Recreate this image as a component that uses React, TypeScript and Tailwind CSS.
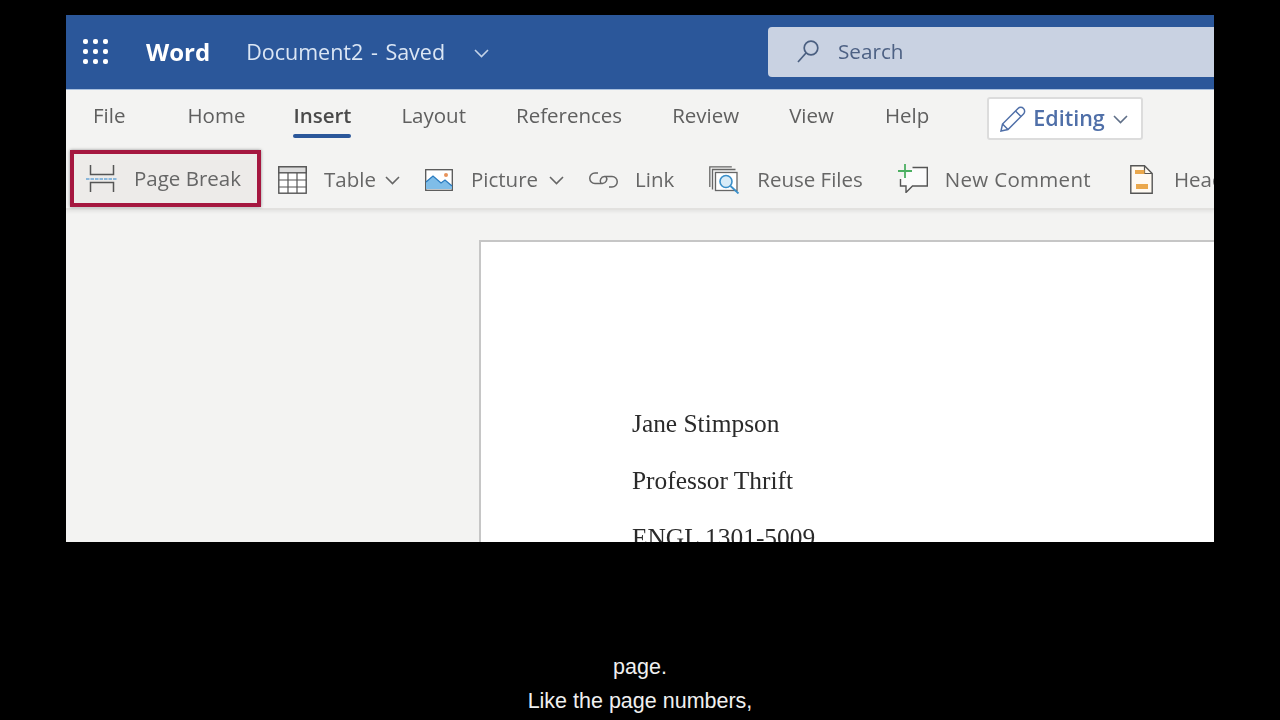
const tabs = [
  { label: "File", ml: "ml-[27px]" },
  { label: "Home", ml: "ml-[62px]" },
  { label: "Insert", ml: "ml-[48px]", active: true },
  { label: "Layout", ml: "ml-[50px]" },
  { label: "References", ml: "ml-[50px]" },
  { label: "Review", ml: "ml-[50px]" },
  { label: "View", ml: "ml-[50px]" },
  { label: "Help", ml: "ml-[51px]" },
];

function AppGrid() {
  const dots = [0, 1, 2, 3, 4, 5, 6, 7, 8];
  return (
    <div className="grid grid-cols-3 gap-[5px] w-[25px] mb-[2px]">
      {dots.map((d) => (
        <div key={d} className="w-[5px] h-[5px] rounded-[2px] bg-white" />
      ))}
    </div>
  );
}

function Chevron({ color = "#666" }: { color?: string }) {
  return (
    <svg width="15" height="9" viewBox="0 0 15 9" fill="none" stroke={color} strokeWidth="1.6">
      <path d="M1 1l6.500 6.500L14 1" />
    </svg>
  );
}

function PageBreakIcon() {
  return (
    <svg width="31" height="27" viewBox="0 0 31 27" fill="none">
      <path d="M4.500 0v9.500h23V0" stroke="#555" strokeWidth="1.500" />
      <path d="M0 14h31" stroke="#6aa6d6" strokeWidth="1.500" strokeDasharray="3.500 1" />
      <path d="M4.500 27v-9.500h23V27" stroke="#555" strokeWidth="1.500" />
    </svg>
  );
}

function TableIcon() {
  return (
    <svg width="29" height="28" viewBox="0 0 29 28" fill="none">
      <rect x="0.800" y="0.800" width="27.400" height="26.400" fill="#fff" stroke="#555" strokeWidth="1.400" />
      <rect x="0.800" y="0.800" width="27.400" height="6" fill="#dcdcdc" stroke="#555" strokeWidth="1.400" />
      <path d="M10 7v20M19 7v20M1 14h27M1 21h27" stroke="#555" strokeWidth="1.200" />
    </svg>
  );
}

function PictureIcon() {
  return (
    <svg width="28" height="22" viewBox="0 0 28 22" fill="none">
      <rect x="0.700" y="0.700" width="26.600" height="20.600" fill="#fff" stroke="#555" strokeWidth="1.300" />
      <path d="M1 20v-7l7-6 8 7 4-3 7 6v3z" fill="#7fbde8" />
      <path d="M1 13l7-6 8 7 4-3 7 6" stroke="#2a7cc0" strokeWidth="1.300" />
      <circle cx="21" cy="6" r="2" fill="#e8935a" />
    </svg>
  );
}

function LinkIcon() {
  return (
    <svg width="29" height="16" viewBox="0 0 29 16" fill="none" stroke="#666" strokeWidth="1.500">
      <path d="M9 1H6a5 5 0 0 0 0 10.500h7.500a4.500 4.500 0 0 0 3.500-7" />
      <path d="M20 15h3a5 5 0 0 0 0-10.500h-7.500a4.500 4.500 0 0 0-3.500 7" />
    </svg>
  );
}

function ReuseIcon() {
  return (
    <svg width="31" height="28" viewBox="0 0 31 28" fill="none">
      <path d="M0.800 21V0.800h22" stroke="#666" strokeWidth="1.300" />
      <path d="M3.500 23.500V3.500h23" stroke="#666" strokeWidth="1.300" />
      <rect x="6.500" y="6.500" width="21.500" height="18" fill="#fff" stroke="#666" strokeWidth="1.300" />
      <circle cx="17" cy="15.500" r="6" fill="#d8ecf8" stroke="#3a8fc9" strokeWidth="1.600" />
      <path d="M21.500 20l8 7.500" stroke="#3a8fc9" strokeWidth="1.800" />
    </svg>
  );
}

function CommentIcon() {
  return (
    <svg width="31" height="29" viewBox="0 0 31 29" fill="none">
      <path d="M3.500 15v7H9v6.500l6.500-6.500H30.300V3.500H15.500" stroke="#555" strokeWidth="1.400" fill="#fbfbfb" />
      <path d="M8 0v14M1 7h14" stroke="#4caf62" strokeWidth="1.800" />
    </svg>
  );
}

function HeaderIcon() {
  return (
    <svg width="23" height="29" viewBox="0 0 23 29" fill="none">
      <path d="M0.800 0.800h13.700l7.700 7.700v19.700H0.800z" fill="#fffaf2" stroke="#555" strokeWidth="1.400" />
      <path d="M14.500 1v7.500H22" stroke="#555" strokeWidth="1.200" />
      <rect x="5" y="5" width="9.500" height="4" fill="#eba84b" />
      <rect x="6" y="19" width="12" height="5" fill="#eba84b" />
    </svg>
  );
}

function SearchIcon() {
  return (
    <svg width="22" height="23" viewBox="0 0 22 23" fill="none" stroke="#4a5f80" strokeWidth="1.700">
      <circle cx="14" cy="8" r="6.800" />
      <path d="M9 13L1 22" />
    </svg>
  );
}

function EditIcon() {
  return (
    <svg width="26" height="26" viewBox="0 0 26 26" fill="none" stroke="#4f6fa8" strokeWidth="1.500">
      <path d="M1 25l1.500-7L18 2.500a2.800 2.800 0 0 1 5.500 5.500L8 23.500z" />
      <path d="M2.500 18l5.500 5.500M15.500 5l5.500 5.500" />
    </svg>
  );
}

export default function App() {
  return (
    <div
      className="w-[1280px] h-[720px] overflow-hidden bg-black flex flex-col"
      style={{ fontFamily: '"Open Sans", sans-serif' }}
    >
      <div className="ml-[66px] mt-[15px] w-[1148px] h-[527px] shrink-0 overflow-hidden flex flex-col bg-[#f3f3f2] blur-[0.5px]">
        {/* title bar */}
        <div className="h-[75px] shrink-0 bg-[#2b579a] border-b border-[#a9c0de] flex items-center">
          <div className="ml-[17px]">
            <AppGrid />
          </div>
          <span className="ml-[38px] text-[24px] font-bold text-white">Word</span>
          <span className="ml-[36px] text-[21.500px] text-[#dbe6f4] [word-spacing:2px]">Document2 - Saved</span>
          <div className="ml-[29px] mt-[3px]">
            <Chevron color="#c3d3e8" />
          </div>
          <div className="ml-auto w-[446px] h-[50px] mb-[1px] bg-[#c9d2e2] rounded-l-[4px] flex items-center pl-[29px]">
            <SearchIcon />
            <span className="ml-[19px] text-[20.700px] text-[#4d6184]">Search</span>
          </div>
        </div>

        {/* tabs */}
        <div className="h-[60px] shrink-0 flex items-start">
          {tabs.map((t) => (
            <div key={t.label} className={`${t.ml} flex flex-col items-stretch pt-[11px]`}>
              <span
                className={
                  t.active
                    ? "text-[20.500px] leading-[28px] font-semibold text-[#4a4a4a]"
                    : "text-[20.500px] leading-[28px] text-[#5f5f5f]"
                }
              >
                {t.label}
              </span>
              {t.active && <div className="mt-[5px] h-[4px] rounded-sm bg-[#2b579a]" />}
            </div>
          ))}
          <div className="ml-[58px] mt-[7px] w-[156px] h-[43px] bg-white border-2 border-[#dcdcdc] rounded-[3px] flex items-center pl-[11px]">
            <EditIcon />
            <span className="ml-[7px] text-[21.500px] font-semibold text-[#4f6fa8]">Editing</span>
            <div className="ml-[8px] mt-[2px]">
              <Chevron color="#5f6f88" />
            </div>
          </div>
        </div>

        {/* command row */}
        <div className="h-[60px] shrink-0 pt-[1px] flex items-center border-b-2 border-[#e2e1df] shadow-[0_2px_3px_rgba(0,0,0,0.06)] text-[20.500px] text-[#666] whitespace-nowrap">
          <div className="ml-[4px] w-[191px] h-[57px] mb-[2px] shrink-0 border-[4px] border-[#a5173f] bg-[#edebe9] shadow-[0_0_3px_rgba(0,0,0,0.4)] flex items-center pl-[12px]">
            <PageBreakIcon />
            <span className="ml-[17px]">Page Break</span>
          </div>
          <div className="ml-[17px] shrink-0 flex"><TableIcon /></div>
          <span className="ml-[17px]">Table</span>
          <div className="ml-[9px] mt-[2px] shrink-0"><Chevron /></div>
          <div className="ml-[25px] shrink-0 flex"><PictureIcon /></div>
          <span className="ml-[18px]">Picture</span>
          <div className="ml-[11px] mt-[2px] shrink-0"><Chevron /></div>
          <div className="ml-[25px] shrink-0 flex"><LinkIcon /></div>
          <span className="ml-[17px]">Link</span>
          <div className="ml-[35px] shrink-0 flex"><ReuseIcon /></div>
          <span className="ml-[17px]">Reuse Files</span>
          <div className="ml-[34px] mb-[3px] shrink-0 flex"><CommentIcon /></div>
          <span className="ml-[17px] tracking-[0.3px]">New Comment</span>
          <div className="ml-[39px] shrink-0 flex"><HeaderIcon /></div>
          <span className="ml-[21px]">Header</span>
        </div>

        {/* document */}
        <div className="flex-1 pt-[30px] pl-[413px] overflow-hidden">
          <div
            className="w-[800px] h-[500px] bg-white border-2 border-[#c6c6c6] pl-[151px] pt-[153px] text-[25.400px] leading-[57px] text-[#2a2a2a]"
            style={{ fontFamily: '"Liberation Serif", serif' }}
          >
            <div>Jane Stimpson</div>
            <div>Professor Thrift</div>
            <div>ENGL 1301-5009</div>
          </div>
        </div>
      </div>

      {/* captions */}
      <div
        className="mt-[108px] flex flex-col items-center text-[21.500px] leading-[34px] text-[#f0f0f0]"
        style={{ fontFamily: '"Liberation Sans", sans-serif' }}
      >
        <div>page.</div>
        <div>Like the page numbers,</div>
      </div>
    </div>
  );
}
